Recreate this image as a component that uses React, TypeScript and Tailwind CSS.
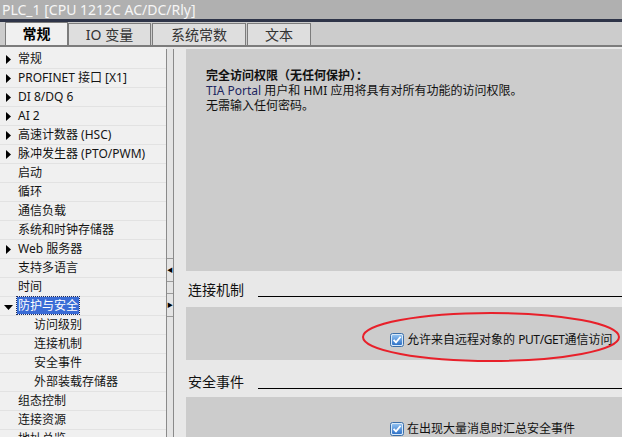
import React from "react";

const cjk = "font-['Noto_Sans','Noto_Sans_CJK_SC',sans-serif]";

interface TreeItem {
  label: string;
  arrow?: "right" | "down";
  child?: boolean;
  selected?: boolean;
}

const items: TreeItem[] = [
  { label: "常规", arrow: "right" },
  { label: "PROFINET 接口 [X1]", arrow: "right" },
  { label: "DI 8/DQ 6", arrow: "right" },
  { label: "AI 2", arrow: "right" },
  { label: "高速计数器 (HSC)", arrow: "right" },
  { label: "脉冲发生器 (PTO/PWM)", arrow: "right" },
  { label: "启动" },
  { label: "循环" },
  { label: "通信负载" },
  { label: "系统和时钟存储器" },
  { label: "Web 服务器", arrow: "right" },
  { label: "支持多语言" },
  { label: "时间" },
  { label: "防护与安全", arrow: "down", selected: true },
  { label: "访问级别", child: true },
  { label: "连接机制", child: true },
  { label: "安全事件", child: true },
  { label: "外部装载存储器", child: true },
  { label: "组态控制" },
  { label: "连接资源" },
  { label: "地址总览" },
];

function Arrow({ dir }: { dir: "right" | "down" }) {
  return dir === "right" ? (
    <svg width="5" height="9" viewBox="0 0 5 9" className="absolute left-[6px] top-[5px]">
      <path d="M0 0 L5 4.5 L0 9 Z" fill="#000" />
    </svg>
  ) : (
    <svg width="9" height="5" viewBox="0 0 9 5" className="absolute left-[4px] top-[8px]">
      <path d="M0 0 L9 0 L4.5 5 Z" fill="#000" />
    </svg>
  );
}

function CheckBox() {
  return (
    <svg width="14" height="14" viewBox="0 0 14 14" className="shrink-0">
      <defs>
        <linearGradient id="cbfill" x1="0" y1="0" x2="0" y2="1">
          <stop offset="0" stopColor="#8fc0f0" />
          <stop offset="1" stopColor="#2f72c8" />
        </linearGradient>
      </defs>
      <rect x="0.5" y="0.5" width="13" height="13" rx="2" fill="#d8e8f8" stroke="#3a6ea8" />
      <rect x="2" y="2" width="10" height="10" rx="1" fill="url(#cbfill)" />
      <path d="M3.6 6.8 L6 9.4 L10.6 3.8" stroke="#fff" strokeWidth="1.8" fill="none" />
    </svg>
  );
}

function Heading({ title, pt, pb }: { title: string; pt: string; pb: string }) {
  return (
    <div className={`flex items-end bg-[#e8e8e8] ${pt} ${pb}`}>
      <span className="pl-[2px] pr-[14px] text-[14px] leading-[18px] text-[#111] whitespace-nowrap">
        {title}
      </span>
      <div className="flex-1 h-px bg-black mb-[2px]" />
    </div>
  );
}

export default function App() {
  return (
    <div className={`w-[622px] h-[437px] overflow-hidden flex flex-col bg-[#e8e8e8] ${cjk}`}>
      <div className="h-[19px] bg-[#b0b0b0] pl-[2px] text-[14px] leading-[19px] text-[#f6f6f6] whitespace-nowrap">
        PLC_1 [CPU 1212C AC/DC/Rly]
      </div>
      <div className="h-[3px] bg-[#2e3448]" />
      <div className="h-[25px] bg-[#cccccc] flex items-end border-b-2 border-[#7c7c7c]">
        <div className="ml-[5px] w-[63px] h-[23px] bg-[#f0f0f0] border border-b-0 border-[#7c7c7c] text-center text-[14px] leading-[22px] font-bold text-black">
          常规
        </div>
        <div className="w-[83px] h-[22px] bg-[#dedede] border border-b-0 border-[#7c7c7c] text-center text-[14px] leading-[21px] text-[#333]">
          IO 变量
        </div>
        <div className="ml-[1px] w-[94px] h-[22px] bg-[#dedede] border border-b-0 border-[#7c7c7c] text-center text-[14px] leading-[21px] text-[#333]">
          系统常数
        </div>
        <div className="ml-[1px] w-[64px] h-[22px] bg-[#dedede] border border-b-0 border-[#7c7c7c] text-center text-[14px] leading-[21px] text-[#333]">
          文本
        </div>
      </div>

      <div className="flex-1 flex min-h-0">
        <div className="w-[166px] bg-[#f0f0f0] pt-[3px] overflow-hidden">
          {items.map((it) => (
            <div
              key={it.label}
              className="relative h-[19px] border-b border-[#e2e2e2] text-[12px] leading-[18px] text-[#141414] whitespace-nowrap"
            >
              {it.arrow && <Arrow dir={it.arrow} />}
              <span
                className={
                  it.selected
                    ? "absolute left-[17px] top-[0px] h-[17px] px-[1px] bg-[#3a6cd6] text-white outline-1 outline-dotted outline-[#1a2a60]"
                    : it.child
                    ? "absolute left-[34px]"
                    : "absolute left-[18px]"
                }
              >
                {it.label}
              </span>
            </div>
          ))}
        </div>

        <div className="w-[8px] bg-[#e4e4e4] border-x border-[#8a8a8a] mt-[2px] flex flex-col">
          <div className="h-[209px]" />
          <div className="h-[24px] border-y border-[#9a9a9a] flex items-center justify-center text-[6px] leading-none text-black">
            ◀
          </div>
          <div className="h-[11px]" />
          <div className="h-[24px] border-y border-[#9a9a9a] flex items-center justify-center text-[6px] leading-none text-black">
            ▶
          </div>
        </div>

        <div className="w-[12px] bg-[#e8e8e8]" />

        <div className="relative flex-1 flex flex-col pt-[2px]">
          <div className="h-[222px] bg-[#cccccc] pt-[19px] pl-[20px] text-[12px] leading-[15px] text-[#111]">
            <div className="font-bold">完全访问权限（无任何保护）：</div>
            <div>
              <span className="text-[#1d2660]">TIA Portal</span> 用户和 HMI 应用将具有对所有功能的访问权限。
            </div>
            <div>无需输入任何密码。</div>
          </div>

          <Heading title="连接机制" pt="pt-[10px]" pb="pb-[8px]" />

          <div className="h-[53px] bg-[#cccccc] pl-[204px] pt-[25px]">
            <div className="flex items-center gap-[3px] text-[12px] leading-[15px] text-[#111] whitespace-nowrap">
              <CheckBox />
              <span>
                允许来自远程对象的 <span className="tracking-[-0.4px]">PUT/GET</span>通信访问
              </span>
            </div>
          </div>

          <Heading title="安全事件" pt="pt-[13px]" pb="pb-[6px]" />

          <div className="flex-1 bg-[#cccccc] pl-[204px] pt-[24px]">
            <div className="flex items-center gap-[3px] text-[12px] leading-[15px] text-[#111] whitespace-nowrap">
              <CheckBox />
              <span>在出现大量消息时汇总安全事件</span>
            </div>
          </div>

          <svg
            width="262"
            height="52"
            viewBox="0 0 262 52"
            className="absolute left-[175px] top-[264px] pointer-events-none"
          >
            <ellipse cx="130" cy="26" rx="128" ry="24" fill="none" stroke="#e8202a" strokeWidth="2" />
          </svg>
        </div>
      </div>
    </div>
  );
}
